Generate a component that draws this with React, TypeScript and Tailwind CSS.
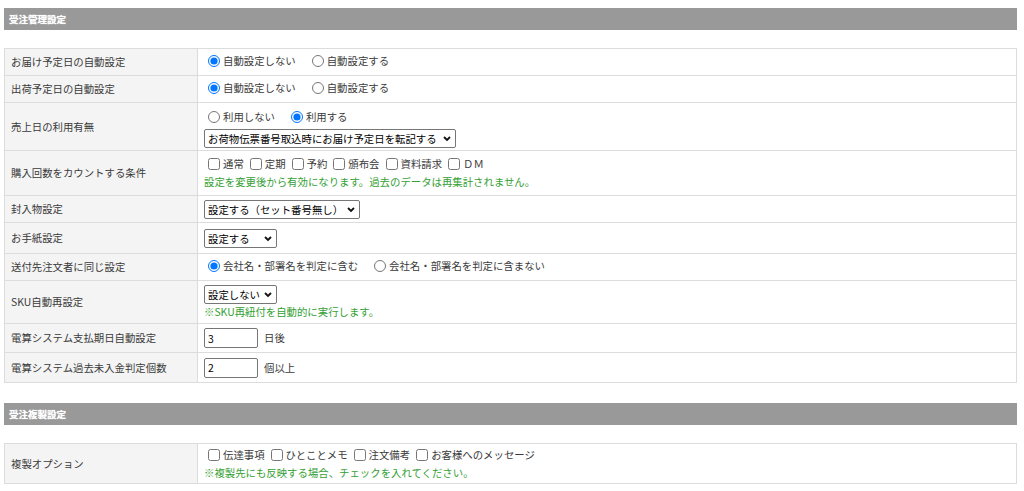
import type { ReactNode } from "react";

const font = { fontFamily: '"Noto Sans CJK JP", "Noto Sans", sans-serif' };

function SectionHeader({ title }: { title: string }) {
  return (
    <div className="flex h-[22px] items-center bg-[#999999] px-[5px] text-[9.5px] font-bold text-white [text-shadow:0_0_1px_#eee]">
      {title}
    </div>
  );
}

function Row({
  label,
  height,
  children,
}: {
  label: string;
  height: string;
  children: ReactNode;
}) {
  return (
    <tr>
      <td
        className={`w-[193px] border border-[#dcdcdc] bg-[#f4f4f4] px-[6px] align-middle text-[#3a3a3a] ${height}`}
      >
        {label}
      </td>
      <td className={`border border-[#dcdcdc] bg-white px-[6px] align-middle text-[#3a3a3a] ${height}`}>
        {children}
      </td>
    </tr>
  );
}

function Radio({
  name,
  label,
  checked,
}: {
  name: string;
  label: string;
  checked?: boolean;
}) {
  return (
    <label className="mr-[12px] inline-flex items-center">
      <input
        type="radio"
        name={name}
        defaultChecked={checked}
        className="ml-[4px] mr-[3px] h-[12px] w-[12px] accent-[#0075ff]"
      />
      {label}
    </label>
  );
}

function Check({ label }: { label: string }) {
  return (
    <label className="mr-[2px] inline-flex items-center">
      <input
        type="checkbox"
        className="ml-[4px] mr-[3px] h-[12px] w-[12px]"
      />
      {label}
    </label>
  );
}

function Select({ value, width }: { value: string; width: string }) {
  return (
    <span className="relative inline-block align-middle">
      <select
        className={`block h-[19px] appearance-none rounded-[2px] border border-[#767676] bg-white pl-[3px] pr-[16px] text-[10.4px] leading-[17px] text-black ${width}`}
      >
        <option>{value}</option>
      </select>
      <svg
        className="pointer-events-none absolute right-[5px] top-[7px]"
        width="8"
        height="6"
        viewBox="0 0 8 6"
      >
        <path d="M1 1l3 3 3-3" stroke="#111" strokeWidth="1.8" fill="none" />
      </svg>
    </span>
  );
}

function Note({ children }: { children: ReactNode }) {
  return <div className="text-[#33a033]">{children}</div>;
}

export default function App() {
  return (
    <div
      className="min-h-[491px] bg-white pl-1 pr-[7px] pt-2 text-[10.4px] leading-[16px]"
      style={font}
    >
      <SectionHeader title="受注管理設定" />
      <table className="mt-[18px] w-full border-collapse border border-[#dcdcdc]">
        <tbody>
          <Row label="お届け予定日の自動設定" height="h-[27px]">
            <Radio name="r1" label="自動設定しない" checked />
            <Radio name="r1" label="自動設定する" />
          </Row>
          <Row label="出荷予定日の自動設定" height="h-[27px]">
            <Radio name="r2" label="自動設定しない" checked />
            <Radio name="r2" label="自動設定する" />
          </Row>
          <Row label="売上日の利用有無" height="h-[48px]">
            <div className="flex flex-col gap-[2px] pt-[4px]">
              <div>
                <Radio name="r3" label="利用しない" />
                <Radio name="r3" label="利用する" checked />
              </div>
              <div>
                <Select
                  value="お荷物伝票番号取込時にお届け予定日を転記する"
                  width="w-[252px]"
                />
              </div>
            </div>
          </Row>
          <Row label="購入回数をカウントする条件" height="h-[45px]">
            <div>
              <Check label="通常" />
              <Check label="定期" />
              <Check label="予約" />
              <Check label="頒布会" />
              <Check label="資料請求" />
              <Check label="ＤＭ" />
            </div>
            <Note>設定を変更後から有効になります。過去のデータは再集計されません。</Note>
          </Row>
          <Row label="封入物設定" height="h-[27px]">
            <Select value="設定する（セット番号無し）" width="w-[156px]" />
          </Row>
          <Row label="お手紙設定" height="h-[31px]">
            <Select value="設定する" width="w-[73px]" />
          </Row>
          <Row label="送付先注文者に同じ設定" height="h-[27px]">
            <Radio name="r4" label="会社名・部署名を判定に含む" checked />
            <Radio name="r4" label="会社名・部署名を判定に含まない" />
          </Row>
          <Row label="SKU自動再設定" height="h-[43px]">
            <div className="pt-[1px]">
              <Select value="設定しない" width="w-[73px]" />
            </div>
            <Note>※SKU再紐付を自動的に実行します。</Note>
          </Row>
          <Row label="電算システム支払期日自動設定" height="h-[29px]">
            <div className="flex items-center">
              <input
                defaultValue="3"
                className="h-[20px] w-[54px] rounded-[2px] border border-[#767676] px-[3px] text-black"
              />
              <span className="ml-[6px]">日後</span>
            </div>
          </Row>
          <Row label="電算システム過去未入金判定個数" height="h-[30px]">
            <div className="flex items-center">
              <input
                defaultValue="2"
                className="h-[20px] w-[54px] rounded-[2px] border border-[#767676] px-[3px] text-black"
              />
              <span className="ml-[6px]">個以上</span>
            </div>
          </Row>
        </tbody>
      </table>

      <div className="mt-[20px]">
        <SectionHeader title="受注複製設定" />
      </div>
      <table className="mt-[18px] w-full border-collapse border border-[#dcdcdc]">
        <tbody>
          <Row label="複製オプション" height="h-[40px]">
            <div>
              <Check label="伝達事項" />
              <Check label="ひとことメモ" />
              <Check label="注文備考" />
              <Check label="お客様へのメッセージ" />
            </div>
            <Note>※複製先にも反映する場合、チェックを入れてください。</Note>
          </Row>
        </tbody>
      </table>
    </div>
  );
}
